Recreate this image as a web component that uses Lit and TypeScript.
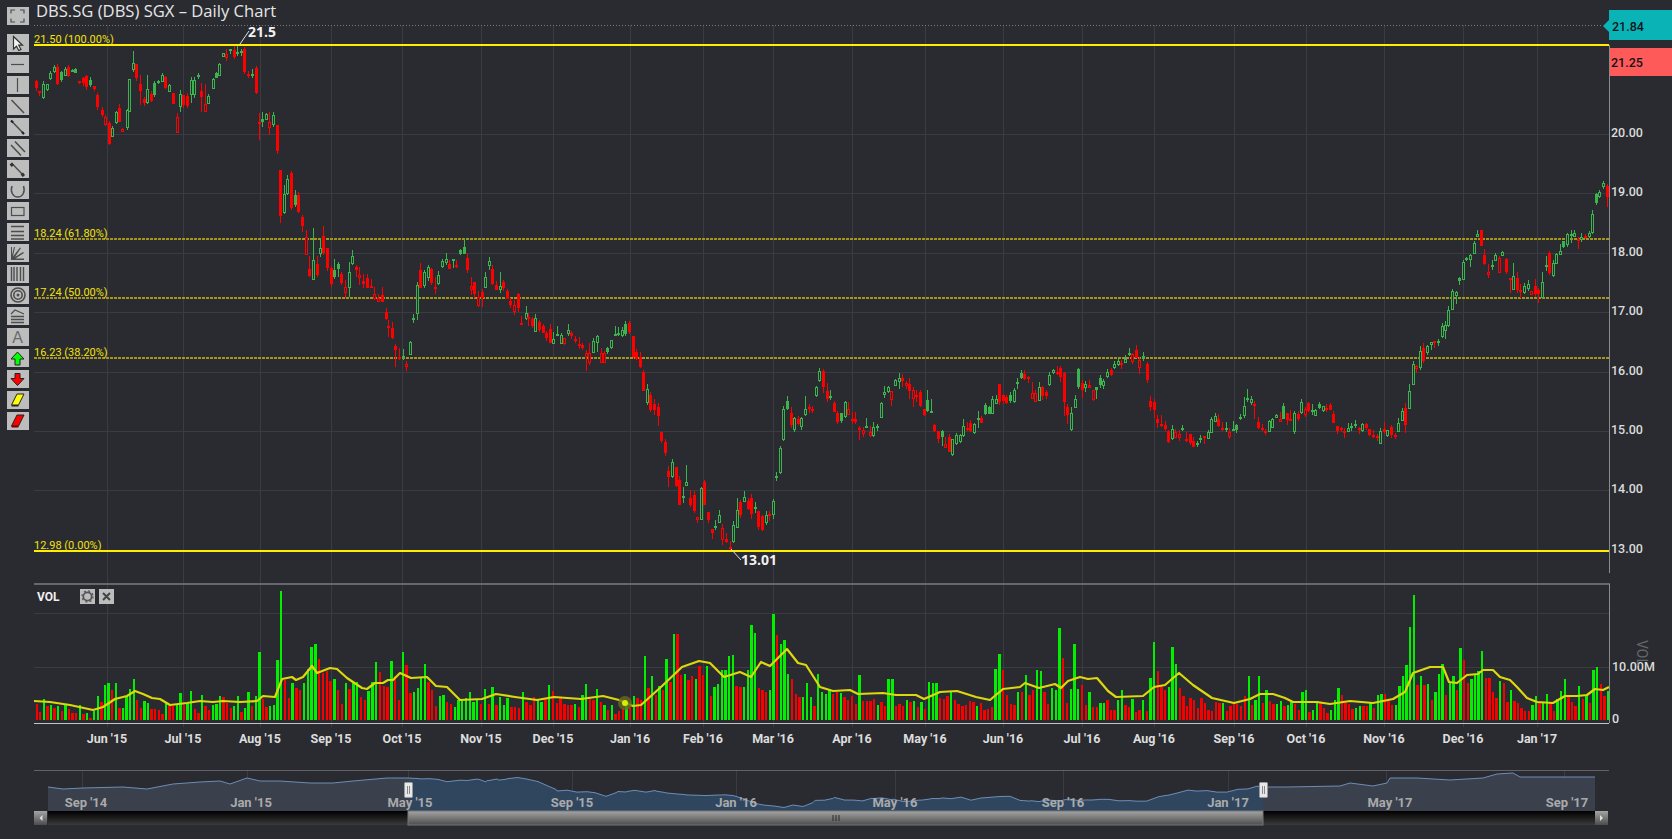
import { LitElement, html, svg, css } from "lit";
import { customElement } from "lit/decorators.js";

const INK = "#4d4d4d";

// kind x,y,h[,wickTop,wickBottom]: G/R hollow, g/r filled, y is body centre in chart pixels
const CANDLES = `
r36,84,7 r39,92,2 G43,90,13 G47,86,5 G50,75,5 G54,69,4 r57,75,17 g61,76,8 G65,72,6 r68,71,9 g72,71,2 g75,71,4
r79,82,2 r83,80,5 r86,81,11 g90,82,5 r94,87,3 r97,101,12 r102,112,5 R105,120,7 r109,133,21 G112,132,8 G116,117,10
r119,115,14,104 R122,130,2 G127,118,17 G129,95,32 G133,66,6,51 r136,71,14 r140,87,7,75,105 r144,101,4 G147,95,13,75 r151,97,7
g154,89,12 g158,82,2 G162,78,6 r165,82,11 G169,88,6 r173,98,11 R177,124,15,113,132 G180,100,12,90,112 r183,100,10 r187,101,10
G191,87,14,77,103 G194,87,14,77,98 g198,76,2 r201,94,6,83,112 R205,107,7,84,110 G208,99,7 G213,83,9 g216,75,5 G219,69,11
G223,54,3 R226,55,3,49,61 g230,50,2 r234,53,7,46 g237,53,2,46 g241,52,2 r244,60,23 r248,75,2,71 g252,75,2,69 r256,80,25
r259,123,2,113,140 g262,120,3,112,127 G266,116,5 R269,124,5,112,135 G273,119,9,112,127 r277,138,26 r280,193,46,,223 G284,203,18,185
G287,186,14,175 r291,190,35 g295,200,10,190 r298,203,17 r302,221,9,215,232 R306,245,17,230,253 r309,272,7,256 G313,269,19,228,279
r317,269,11,256,277 G320,250,5,238,257 r323,244,17,226,255 r327,258,20 r331,276,16,266,287 g334,273,7,259,279 g338,266,5,262,277
r341,278,9 R345,289,5,280,298 G349,279,15,262,297 G352,259,7,250,265 r356,268,3,265,277 R359,276,2,267,285 r363,282,3,274,288
r367,283,10,274,288 r371,287,2,279,288 R374,296,4,287,300 R378,299,3,294,302 r382,298,7,287,302 r386,315,7,308 r388,327,2,320,337
r392,333,10,322,339 r395,348,4,,367 r399,358,2,348,360 g403,356,1,349,360 R406,365,2,361,371 G410,348,12 g413,318,1,314,323
G417,299,28,282,320 r420,279,18,263,288 G424,278,13,270 G428,272,10,265,281 r431,276,14,268 r435,287,1,277,294 G438,279,8,271,285
G442,263,5,259,268 G446,260,3,253,265 r449,266,5,260 g453,260,2,259,268 r456,266,2,260,268 g460,252,4,249,255 g464,250,7,238,254
r467,264,12,253,273 R471,287,3,277,295 r474,288,12,282,298 R478,301,8,291 r482,295,6,289,307 G485,282,10,272,288 G489,263,4,257,270
r492,276,15,265,285 r496,287,5,281,290 G500,287,3,272,293 r503,285,6,280,291 r507,295,8,289 r510,303,4,298,308 R514,308,6,300,315
r518,301,14,293,312 r521,323,1,316,324 G526,315,5,306 r528,318,2,313,326 r532,322,7 G535,324,13,314 r539,326,8 r543,329,7
r546,335,5,331,341 r550,336,14,324,343 G553,341,4,332 g557,335,2,326,336 G561,339,8,333 R564,340,5 G568,331,3,324 r571,334,3,331
r575,340,2 r579,344,1,337,349 r582,346,3 R586,354,3,,371 R589,357,9,343,365 G593,346,11,338 G597,339,6,335,352 R601,357,9,348
R604,357,9,351 g607,350,4,,354 G611,343,7 g615,334,1,326,336 g618,333,1,327,336 G622,332,5 g625,329,10 r629,327,9 r633,346,21,338
r636,355,7 r640,362,10,352 r643,381,19,370 G647,395,13,384,405 r650,402,15,392,412 r654,407,6,399,415 r658,411,9,403,426 r661,436,9
r665,447,11,439 r668,474,6,466,487 G672,469,14,459 r676,476,19,467,487 r679,492,25,476,505 g683,497,2,487,503 G686,483,3,465,485
r690,501,7,490,507 r694,503,16,491,513 R697,518,2,,523 G701,503,31,,520 r704,493,23,480 r708,516,8 r712,531,4,,539 g715,527,2,520,530
G719,518,7,510,523 R722,533,11,524,545 r726,540,3,533,543 r730,548,2,541,550 G733,533,16,521 G737,518,17,498,528 r740,508,13,500,518
G744,499,4,491,502 r748,505,8,498,510 r751,506,16,494,519 g755,508,2,502,513 r758,519,16 r762,523,14,515,531 G766,518,7,511,525
r769,515,2,,521 G773,507,13,,519 g776,477,2,472,481 G780,460,24,446
G783,424,30,406 g787,405,8,396,410 r791,419,12,407,428 G794,423,11,,432 r798,421,5,416,425 G801,422,8,,430 G805,411,5,396,416 r809,408,2,404,413
r812,409,1,406,413 G816,391,8,386 G819,375,9 r823,379,16,,393 r827,395,8,383,402 g830,397,2,390,400 r834,407,9 r837,417,9,,424
g841,417,8,,423 G845,409,14,,418 R848,411,5,402,414 r852,419,1,412,424 r855,420,3,412 r859,428,1,426,440 R863,431,3,,437 g866,426,1,418,428
R870,433,3,426,437 G873,431,8,422,437 g877,427,2,424,431 G881,410,14 G884,393,2,386,398 G888,389,4,386,393 R891,395,8,,406 G895,382,5,,386
G899,379,3,373,389 r902,379,3,374,387 R906,384,2,,389 r909,387,7,378,399 R913,394,8,,407 r916,395,1,390,402 r920,399,14 r924,412,6,409,416
g927,405,11,390 g931,411,1,399,413 r934,428,6,424 r938,435,8,,443 g942,434,6,,446 R945,445,3,437,447 r949,444,15,434,452 G952,446,15 G956,439,8,,445
G960,438,6,434 G963,430,9,419 r967,428,1,422,431 r970,427,8,420 G974,428,8 g978,419,2,411,428 r981,420,5,416 g985,409,9,403 g989,410,7
G992,406,14,396 G996,401,4,395,403 r999,393,18 r1003,398,6,394 r1006,400,6,395,404 g1010,398,6 G1014,395,11 g1017,383,2,378,389
g1021,375,5,,379 r1024,376,5,370,380 r1028,378,2,376,383 R1032,395,5,382,398 R1035,397,8,390,402 G1039,393,13,382 r1042,391,9,386,400
r1046,394,4,390,399 G1049,379,9,372 G1053,371,2,369,374 r1057,372,1,366 r1060,372,9,366,382 r1064,387,29,372,416 r1067,411,8,404,424
G1071,421,16,407 G1075,403,8,395 g1078,378,18,,389 r1082,386,7,380,398 G1085,385,3,381,392 r1089,386,3,380,388 R1093,394,9 g1096,388,3,,399
g1100,381,7 G1103,383,4,,389 G1107,374,4,369 r1111,372,5 G1114,365,3,361,369 G1118,362,3,358,366
r1121,364,2,360,369 G1125,360,3,355 g1129,354,2,348 R1132,357,7,353,364 r1136,354,8,345 R1139,363,7,,374 g1143,357,2,352,361 r1147,372,16,,383
r1150,404,6,396,411 r1154,406,8,,418 r1157,421,4,415,428 r1161,425,2,415,427 r1165,427,4,421,431 r1168,436,11 G1172,433,9,425,440 R1175,434,5,429
R1179,435,3,430,441 g1182,429,2,425,431 r1186,440,2,432,442 r1190,438,9 r1193,444,6,437,447 g1197,443,1,441,447 g1200,438,1,,443 r1204,437,2,436,444
G1208,435,6 G1211,425,13 G1215,418,5,413 r1218,422,7,414 r1222,429,2,422,431 g1226,428,1,422,432 R1229,434,4,428 g1233,429,1,421,431 g1236,427,5,424,433
g1240,417,1,414,420 G1244,410,9,397 g1247,399,2,389,402 G1251,400,3,,405 r1254,405,2,,419 r1258,425,6,417 r1262,429,2,424,431 r1265,432,2,429,435
G1269,426,10 G1272,423,8,418 G1276,416,2,414,418 R1280,420,2,412 g1283,412,13 r1287,416,7,,425 r1290,419,1,410,421 G1294,422,18,411 r1298,416,5
G1301,407,10 R1305,411,5,,417 r1308,407,8,402 g1312,410,1,404,415 G1315,412,5 g1319,406,4,402 G1323,408,4,,412 r1326,408,1,404,412 r1330,407,5,403
r1333,418,9,411 r1337,428,5,,434 r1341,429,2,427,432 r1344,431,1,,438 G1348,429,3,423,432 g1351,426,1,423,431 g1355,425,2,420,428 r1359,429,2,427,434
G1362,427,6 r1366,426,4,423,430 r1369,432,6,429 r1373,435,1,430,438 r1377,437,2,434,441 G1380,437,12 r1384,430,3,422 G1387,432,5 r1391,431,8
r1395,436,2,433,439 G1398,427,8,418,432 G1402,415,9,408 r1405,416,17,403,433 G1409,399,17,384,408 G1413,374,20,361 R1416,367,2,,373
G1420,359,16,346 r1423,354,13,343,363 G1427,349,6,345,355 G1431,343,2,,350 r1434,342,2,,348 g1438,342,2,339 G1442,331,10 G1445,327,5,321,339
G1448,317,15,306 G1452,300,18 G1456,293,3,,304 g1459,279,3,,285 G1463,270,17,260 g1466,259,2,257 G1470,257,4,254,267 G1474,248,10,241
G1477,235,2,230 r1481,238,16,,246 r1484,259,9,249,265 R1488,273,2,264,278 g1492,265,1,260,270 G1495,257,5,253,261 R1499,265,14 G1502,253,3,251,256
r1506,265,13,,274 r1510,279,2,278,293 G1513,282,13,263 r1517,284,12,272 r1520,290,1,284,298 G1524,289,6,,294 G1528,286,4,280 R1531,292,3,,294
r1535,290,8,279 r1538,292,4,288,303 G1542,289,15,272 g1546,265,1,256,271 r1549,263,20,,275 G1553,269,12,260 G1556,258,9 G1560,252,3,244 g1563,244,6,241
G1567,239,10,233 g1571,234,1,230,243 G1574,234,3 r1578,239,1,237,249 G1581,238,2,233,242 r1585,237,2,234,239 G1589,234,3,231 G1592,223,18,210
g1596,198,9,193,205 G1599,194,4,,198 G1603,184,3,181,189 r1607,191,11,,207
`
	.trim()
	.split(/\s+/)
	.map((entry) => {
		const [x, y, h, top, bottom] = entry.slice(1).split(",").map(Number);
		return { kind: entry[0], x, y, h, top, bottom };
	});

// volume runs as [first x, last x, heights]: bar height in pixels, negative is a red bar
const VOLUME: [number, number, number[]][] = [
	[36.7, 281, [
		-16, -8, 21, -14, 15, -12, 14, -9, 15, -11, -7, -7, 15, -6, 7, -2, 9, 24, -18, 35, 37, -30, 37, -12, 12, 24, 31, 41, -20, -12, 19, 17, -11, -11, -10,
		-6, 18, -14, -14, 15, 27, -15, 16, 29, -11, -7, 25, -14, -10, 15, 16, 24, -23, -17, -12, 14, 24, -8, 12, 28, -14, 24, 68, -21, -13, 14, 15, 60, 129,
	]],
	[285, 418, [-40, -22, 37, -32, -30, 37, 51, 73, 76, -61, -47, -49, -39, 41, -30, -16, 37, -31, 37, 38, -23, -20, 29, 38, 58, -48, -34, -33, 59, -44, -20, 68, -55, -27, 28, 32]],
	[421, 481, [43, 56, -38, -30, -14, 24, 25, -18, -16, 13, 20, 19, 22, 28, 18, 21, -16]],
	[485, 553, [31, -16, 33, -15, 23, 15, 22, -13, -13, -12, 28, -18, -15, -23, 20, 18, -21, 35, -29]],
	[557, 630, [-17, -22, -16, -15, -15, 16, -13, 25, 36, -21, -20, 31, -18, 15, -10, 15, -6, -9, -12, 15, -14]],
	[634, 703, [24, -22, -20, 64, -32, 44, -25, 34, -30, 61, -38, 86, -86, -45, 46, -40, -44, 41, -54, -45]],
	[707, 773.6, [54, -24, 33, 36, 50, 50, 64, 65, -34, -33, 33, 50, 95, 87, -32, -30, -28, 30, 106]],
	[777, 852, [-85, 76, 80, 46, -41, -26, -23, 23, 37, 23, -14, 46, 28, 26, 30, -26, -28, 27, -23, -20, -24]],
	[856, 925, [-16, 45, -19, -19, -19, -21, 15, -18, -14, 41, 41, -14, -16, -14, 20, -18, 19, -13, 18, -11]],
	[929, 1003, [38, 37, 37, -22, -21, -24, 28, -20, -16, -14, -15, -19, -18, 14, -17, -10, -11, -13, 51, 66, -50]],
	[1007, 1082, [-25, -16, -15, 28, -28, 45, -25, -30, 50, 49, -28, -16, 32, 30, 92, -62, -17, 31, 76, 31, -35]],
	[1086, 1154, [-15, 28, -13, -13, 17, 17, -20, -10, -10, 20, 30, -15, -13, 21, -8, -10, 20, -9, 42, 78]],
	[1158, 1234, [-49, -34, -30, 33, 73, 56, -32, -24, -14, -22, -20, -12, -22, -17, -10, -9, -18, -17, 17, -9, -14, -18]],
	[1237, 1249, [-16, -14, -24, 44]],
	[1252, 1608, [
		-15, 20, 44, -17, 30, -19, -16, 16, 19, -14, 15, 18, -16, -10, 28, 30, -8, 10, 17, -17, -12, -7, 10, 20, 32, -25, -17, -16, -11, 12, 14, -14, -14, 18,
		-12, 25, 26, -26, -19, -15, 15, 34, 44, 55, 93, 125, -35, 44, -35, 36, -20, 28, 46, 56, -25, 38, 44, -30, 72, -60, -37, 41, 45, 49, 69, -42, -42, -28,
		-22, 39, -37, -18, 30, -19, -17, -12, -9, -9, 15, 24, -18, 18, 26, -17, -9, 21, 29, 41, -23, -18, -14, 34, -21, 24, -17, 50, 53, -36, -24, 29,
	]],
];

const MA_LINE = [
	[34, 701], [50, 702], [70, 705], [93, 710], [103, 707], [115, 699], [127, 696], [135, 691], [143, 694], [152, 698], [160, 699], [170, 705], [187, 703],
	[200, 701], [213, 702], [223, 701], [240, 702], [257, 701], [263, 696], [275, 697], [282, 679], [292, 677], [296, 680], [303, 677], [312, 666], [317, 673],
	[330, 668], [337, 669], [347, 678], [362, 688], [367, 689], [375, 683], [383, 683], [388, 680], [393, 680], [400, 673], [411, 678], [427, 677], [436, 686],
	[447, 687], [460, 700], [482, 699], [496, 694], [515, 697], [537, 700], [554, 697], [581, 699], [603, 696], [619, 700], [633, 706], [641, 705], [661, 687],
	[682, 667], [699, 661], [710, 663], [724, 677], [740, 672], [751, 677], [761, 662], [770, 666], [787, 649], [798, 663], [806, 665], [820, 687], [833, 691],
	[850, 690], [858, 694], [883, 693], [896, 695], [916, 695], [924, 699], [940, 692], [957, 691], [976, 697], [990, 700], [1003, 689], [1020, 687], [1025, 683],
	[1039, 688], [1055, 684], [1061, 688], [1068, 681], [1080, 677], [1088, 679], [1097, 678], [1108, 691], [1116, 697], [1143, 696], [1154, 687], [1165, 685],
	[1179, 673], [1193, 685], [1212, 698], [1234, 703], [1250, 699], [1260, 694], [1273, 694], [1285, 698], [1293, 702], [1317, 702], [1330, 704], [1350, 701],
	[1373, 703], [1393, 699], [1405, 692], [1413, 673], [1430, 667], [1443, 667], [1449, 682], [1457, 683], [1467, 675], [1478, 674], [1483, 670], [1493, 670],
	[1500, 677], [1510, 680], [1517, 687], [1527, 698], [1537, 702], [1553, 703], [1565, 696], [1577, 696], [1587, 695], [1595, 689], [1603, 690], [1609, 687],
];

const MONTHS: [string, number][] = [
	["Jun '15", 107], ["Jul '15", 183], ["Aug '15", 260], ["Sep '15", 331], ["Oct '15", 402], ["Nov '15", 481], ["Dec '15", 553], ["Jan '16", 630], ["Feb '16", 703],
	["Mar '16", 773], ["Apr '16", 852], ["May '16", 925], ["Jun '16", 1003], ["Jul '16", 1082], ["Aug '16", 1154], ["Sep '16", 1234], ["Oct '16", 1306], ["Nov '16", 1384],
	["Dec '16", 1463], ["Jan '17", 1537],
];

const NAV_LABELS: [string, number][] = [
	["Sep '14", 86], ["Jan '15", 251], ["May '15", 410], ["Sep '15", 572], ["Jan '16", 736], ["May '16", 895], ["Sep '16", 1063], ["Jan '17", 1228], ["May '17", 1390], ["Sep '17", 1567],
];

const NAV_GRID = [82, 247, 408, 572, 736, 895, 1063, 1228, 1386, 1564];

const PRICES = [20, 19, 18, 17, 16, 15, 14, 13];
const priceY = (price: number) => Math.round(134 + (20 - price) * 59.4);

const FIBS: [string, number, number, boolean][] = [
	["21.50 (100.00%)", 45, 43, true],
	["18.24 (61.80%)", 239, 237, false],
	["17.24 (50.00%)", 298, 296, false],
	["16.23 (38.20%)", 358, 356, false],
	["12.98 (0.00%)", 551, 549, true],
];

const NAV_START = [
	[48, 787], [63, 789], [83, 788], [123, 787], [147, 789], [173, 784], [200, 782], [220, 781], [230, 784], [247, 778], [260, 781], [280, 781], [310, 783], [333, 783], [353, 781], [387, 778], [408, 778],
];
const NAV_END = [
	[1287, 787], [1340, 786], [1350, 783], [1373, 786], [1387, 783], [1390, 778], [1417, 778], [1450, 780], [1483, 778], [1497, 774], [1513, 773], [1520, 777], [1595, 777],
];

function wave(seed: number) {
	return ((seed * 2654435761) >>> 0) % 7;
}

function points(list: number[][]) {
	return list.map(([x, y]) => `${x},${y}`).join(" ");
}

function navLine() {
	const middle = CANDLES.filter((c) => c.x % 3 === 0 && c.x > 40).map((c) => [Math.round(408 + ((c.x - 34) * 855) / 1575), Math.round((778 + (c.y - 60) * 0.0615) * 10) / 10]);
	return [...NAV_START, ...middle.filter(([x]) => x > 408 && x < 1263), [1263, 787], ...NAV_END];
}

const ICONS = [
	svg`<path d="M4 6.500V3h4M13 3h4v3.500M17 11.500V15h-4M8 15H4v-3.500" fill="none" stroke="${INK}" stroke-width="1.200" />`,
	svg`<path d="M6.500 2.500v12.500l3-2.800 2.300 4.300 2.200-1.100-2.300-4.200h3.800z" fill="#f4f4f4" stroke="#333" stroke-width="1.200" />`,
	svg`<path d="M4 9.500h13" stroke="${INK}" stroke-width="1.200" />`,
	svg`<path d="M10.500 2v14" stroke="${INK}" stroke-width="1.200" />`,
	svg`<path d="M4.500 3l12.500 13" stroke="${INK}" stroke-width="1.500" />`,
	svg`<path d="M4.500 3l12.500 13" stroke="${INK}" stroke-width="1.500" /><path d="M4 2.500l2 2M15 14l2 2" stroke="#222" stroke-width="2.200" />`,
	svg`<path d="M4 6l10 10.500M8 2.500l10 10.500" stroke="${INK}" stroke-width="1.600" />`,
	svg`<path d="M4.500 3l12.500 13" stroke="${INK}" stroke-width="1.400" /><path d="M5 2.500l2 2.400-2.400 2-2-2.400zM16 12.500l2 2.400-2.400 2-2-2.400z" fill="#333" />`,
	svg`<path d="M5 5c-2 6 1 11 5.800 11s7.700-5 5.700-11" fill="none" stroke="${INK}" stroke-width="1.500" />`,
	svg`<rect x="4.500" y="5.500" width="12.500" height="8" fill="none" stroke="${INK}" stroke-width="1.200" />`,
	svg`<path d="M4 3.500h13M4 8.500h13M4 12.500h13M4 16h13" stroke="${INK}" stroke-width="1.400" />`,
	svg`<path d="M4 16h13v-1.500H8.500L17 9l-1-1-8 5 6-9-1-.5-7 9 2-9.500H7L5 11V3H4z" fill="${INK}" />`,
	svg`<path d="M4.500 2v14M7 2v14M10 2v14M13.500 2v14M16.500 2v14" stroke="${INK}" stroke-width="1.400" />`,
	svg`<circle cx="11" cy="9" r="7" fill="none" stroke="${INK}" stroke-width="1.600" /><circle cx="11" cy="9" r="4.200" fill="none" stroke="${INK}" stroke-width="1.600" /><circle cx="11" cy="9" r="1.500" fill="${INK}" />`,
	svg`<path d="M4 7l4-4 9 4" fill="none" stroke="${INK}" stroke-width="1.200" /><path d="M4 9.500h13M4 12.500h13M4 15.500h13" stroke="${INK}" stroke-width="1.300" />`,
	svg`<text x="10.500" y="15" text-anchor="middle" font-family="Liberation Sans, sans-serif" font-size="16" fill="#6a6a6a">A</text>`,
	svg`<path d="M10.500 3l6.500 7h-4v6H8v-6H4z" fill="#0f0" stroke="#222" stroke-width="1" />`,
	svg`<path d="M10.500 15.500L4 8.500h4v-5h5v5h4z" fill="#f00" stroke="#222" stroke-width="1" />`,
	svg`<path d="M10 3h7l-5.500 11h-7z" fill="#ff0" stroke="#222" stroke-width="1" /><path d="M4.500 14h7v1.500h-7z" fill="#222" />`,
	svg`<path d="M10 3h7l-5.500 11h-7z" fill="#f00" stroke="#222" stroke-width="1" /><path d="M4.500 14h7v1.500h-7z" fill="#700" />`,
];

@customElement("app-root")
export class AppRoot extends LitElement {
	static override styles = css`
		:host {
			background: #2a2b30;
			display: block;
			height: 839px;
			overflow: hidden;
			width: 1672px;
		}

		.page {
			display: grid;
			grid-template-columns: 34px 1638px;
			grid-template-rows: 25px 814px;
		}

		.title {
			color: #e6e6e6;
			font-family: "Open Sans", sans-serif;
			font-size: 16.6px;
			line-height: 22px;
			padding-left: 2px;
			white-space: nowrap;
		}

		.tools {
			align-items: flex-start;
			display: flex;
			flex-direction: column;
			gap: 3px;
			grid-column: 1;
			grid-row: 1 / 3;
			padding: 7px 0 0 7px;
		}

		.tools svg {
			background: #bdbdbd;
			display: block;
			height: 18px;
			width: 22px;
		}

		.tools svg:first-child {
			margin-bottom: 6px;
		}

		.chart {
			display: block;
			grid-column: 2;
			grid-row: 2;
			overflow: visible;
		}

		.grid {
			stroke: #3b3c42;
			stroke-width: 1;
			shape-rendering: crispEdges;
		}

		.crisp {
			shape-rendering: crispEdges;
		}

		.fib-label {
			fill: #f2e20c;
			font: 11px Roboto, sans-serif;
		}

		.price {
			fill: #dcdcdc;
			font: 500 12.5px Roboto, sans-serif;
		}

		.tag {
			fill: #10141a;
			font: 500 12.5px Roboto, sans-serif;
		}

		.month {
			fill: #dddddd;
			font: 700 12.5px Roboto, sans-serif;
			text-anchor: middle;
		}

		.nav-label {
			fill: #aaaaaa;
			font: 700 13px Roboto, sans-serif;
			text-anchor: middle;
		}

		.note {
			fill: #f2f2f2;
			font: 700 14px "Open Sans", sans-serif;
		}

		.vol-title {
			fill: #f0f0f0;
			font: 700 12px Roboto, sans-serif;
		}

		.vol-axis {
			fill: #66676b;
			font: 14px Roboto, sans-serif;
			text-anchor: middle;
		}
	`;

	private renderGrid() {
		return svg`
			${PRICES.map((p) => svg`<line class="grid" x1="34" x2="1609" y1=${priceY(p)} y2=${priceY(p)}></line>`)}
			${[613, 667].map((y) => svg`<line class="grid" x1="34" x2="1609" y1=${y} y2=${y}></line>`)}
			${MONTHS.map(([, x]) => svg`<line class="grid" x1=${x} x2=${x} y1="25" y2="727"></line>`)}
		`;
	}

	private renderCandles() {
		return CANDLES.map((c) => {
			const green = c.kind === "g" || c.kind === "G";
			const hollow = c.kind === "G" || c.kind === "R";
			const colour = green ? "#3cb44e" : "#ff0000";
			const top = c.y - c.h / 2;
			const bottom = c.y + c.h / 2;
			const wickTop = c.top || top - wave(c.x) / 2;
			const wickBottom = c.bottom || bottom + wave(c.x + 7) / 2;
			const x = Math.round(c.x);
			return svg`
				<line x1=${x + 0.5} x2=${x + 0.5} y1=${wickTop} y2=${wickBottom} stroke=${colour}></line>
				${hollow
					? svg`<rect x=${x - 0.5} y=${Math.round(top) + 0.5} width="2" height=${Math.max(c.h, 2)} fill="#2a2b30" stroke=${colour}></rect>`
					: svg`<rect x=${x - 1} y=${top} width="3" height=${Math.max(c.h, 2)} fill=${colour}></rect>`}
			`;
		});
	}

	private renderFibs() {
		return FIBS.map(([label, y, textY, solid]) => svg`
			<line class="crisp" x1="34" x2="1609" y1=${y} y2=${y} stroke=${solid ? "#ffee00" : "#a3961a"} stroke-width="2" stroke-dasharray=${solid ? "none" : "3 1"}></line>
			<text class="fib-label" x="34" y=${textY}>${label}</text>
		`);
	}

	private renderVolume() {
		return svg`
			<line class="crisp" x1="34" x2="1610" y1="584" y2="584" stroke="#66676a" stroke-width="2"></line>
			<line class="crisp" x1="34" x2="1609" y1="723.500" y2="723.500" stroke="#c4c4c4" stroke-width="1"></line>
			${VOLUME.map(([from, to, bars]) =>
				bars.map((v, i) => svg`
					<rect class="crisp" x=${from + (i * (to - from)) / (bars.length - 1) - 1.2} y=${720 - Math.abs(v)} width="2.400" height=${Math.abs(v)} fill=${v > 0 ? "#00f000" : "#f60000"}></rect>
				`)
			)}
			<polyline points=${points(MA_LINE)} fill="none" stroke="#dcd80e" stroke-width="2.200" stroke-linejoin="round"></polyline>
			<circle cx="625" cy="703" r="7" fill="#6a6a20" fill-opacity="0.8"></circle>
			<circle cx="625" cy="703" r="3" fill="#d6f000"></circle>
			<text class="vol-title" x="37" y="601">VOL</text>
			<rect x="80" y="589" width="15" height="15" fill="#bdbdbd"></rect>
			<circle cx="87.500" cy="596.500" r="4.200" fill="none" stroke="#555" stroke-width="1.800"></circle>
			<circle cx="87.500" cy="596.500" r="5.600" fill="none" stroke="#555" stroke-width="1.200" stroke-dasharray="2 2.400"></circle>
			<rect x="99" y="589" width="15" height="15" fill="#bdbdbd"></rect>
			<path d="M103 593l7 7M110 593l-7 7" stroke="#444" stroke-width="2"></path>
			<text class="price" x="1612" y="671">10.00M</text>
			<text class="price" x="1612" y="723">0</text>
			<text class="vol-axis" transform="translate(1637 653) rotate(90)">VOL</text>
		`;
	}

	private renderAxis() {
		return svg`
			<line class="crisp" x1="1609.500" x2="1609.500" y1="45" y2="573" stroke="#8b8b8b"></line>
			<line class="crisp" x1="1609.500" x2="1609.500" y1="584" y2="723" stroke="#8b8b8b"></line>
			<line x1="34" x2="1603" y1="25.500" y2="25.500" stroke="#7a7a7a" stroke-dasharray="1 2"></line>
			${PRICES.map((p) => svg`<text class="price" x="1611" y=${priceY(p) + 3}>${p.toFixed(2)}</text>`)}
			<rect x="1609" y="10" width="63" height="30" fill="#0ab4b6"></rect>
			<path d="M1603 26l6-6v12z" fill="#0ab4b6"></path>
			<text class="tag" x="1612" y="31">21.84</text>
			<rect x="1610" y="48" width="62" height="28" fill="#ff5a5a"></rect>
			<text class="tag" x="1611" y="67">21.25</text>
			${MONTHS.map(([label, x]) => svg`<text class="month" x=${x} y="743">${label}</text>`)}
		`;
	}

	private renderNotes() {
		return svg`
			<path d="M240 44l9-13" stroke="#e0e0e0"></path>
			<text class="note" x="248" y="37">21.5</text>
			<path d="M731 549l10 11" stroke="#e0e0e0"></path>
			<text class="note" x="741" y="565">13.01</text>
		`;
	}

	private renderNavigator() {
		const line = navLine();
		const area = [...line, [1595, 811], [48, 811]];
		return svg`
			<defs>
				<linearGradient id="track" x1="0" x2="0" y1="0" y2="1">
					<stop offset="0" stop-color="#000"></stop>
					<stop offset="1" stop-color="#3a3a3a"></stop>
				</linearGradient>
				<linearGradient id="thumb" x1="0" x2="0" y1="0" y2="1">
					<stop offset="0" stop-color="#a4a4a4"></stop>
					<stop offset="1" stop-color="#4c4c4c"></stop>
				</linearGradient>
				<clipPath id="range"><rect x="408" y="770" width="855" height="41"></rect></clipPath>
			</defs>
			<line class="crisp" x1="34" x2="1609" y1="770.500" y2="770.500" stroke="#636367"></line>
			${NAV_GRID.map((x) => svg`<line class="grid" x1=${x} x2=${x} y1="771" y2="825"></line>`)}
			<polygon points=${points(area)} fill="#3a404c"></polygon>
			<polygon points=${points(area)} fill="#30465f" clip-path="url(#range)"></polygon>
			<polyline points=${points(line)} fill="none" stroke="#6c8db8"></polyline>
			${NAV_LABELS.map(([label, x]) => svg`<text class="nav-label" x=${x} y="807">${label}</text>`)}
			<rect x="48" y="811" width="1547" height="14" fill="url(#track)"></rect>
			<rect x="34" y="811" width="13" height="14" fill="url(#thumb)"></rect>
			<path d="M42.500 815v6l-3-3z" fill="#e0e0e0"></path>
			<rect x="1595" y="811" width="13" height="14" fill="url(#thumb)"></rect>
			<path d="M1600 815v6l3-3z" fill="#e0e0e0"></path>
			<rect x="408" y="811" width="855" height="14" fill="url(#thumb)" stroke="#777"></rect>
			<path d="M833 815v6M836 815v6M839 815v6" stroke="#2c2c2c"></path>
			${[404, 1259].map((x) => svg`
				<rect x=${x + 0.5} y="782.500" width="8" height="15" rx="1" fill="#e8e8e8" stroke="#999"></rect>
				<path d="M${x + 3.5} 786v8M${x + 5.5} 786v8" stroke="#888"></path>
			`)}
		`;
	}

	override render() {
		return html`
			<div class="page">
				<div class="tools">
					${ICONS.map((icon) => html`<svg viewBox="0 0 22 18">${icon}</svg>`)}
				</div>
				<div class="title">DBS.SG (DBS) SGX – Daily Chart</div>
				<svg class="chart" width="1638" height="814" viewBox="34 25 1638 814">
					${this.renderGrid()}
					${this.renderFibs()}
					<g shape-rendering="crispEdges">${this.renderCandles()}</g>
					${this.renderVolume()}
					${this.renderAxis()}
					${this.renderNotes()}
					${this.renderNavigator()}
				</svg>
			</div>
		`;
	}
}
